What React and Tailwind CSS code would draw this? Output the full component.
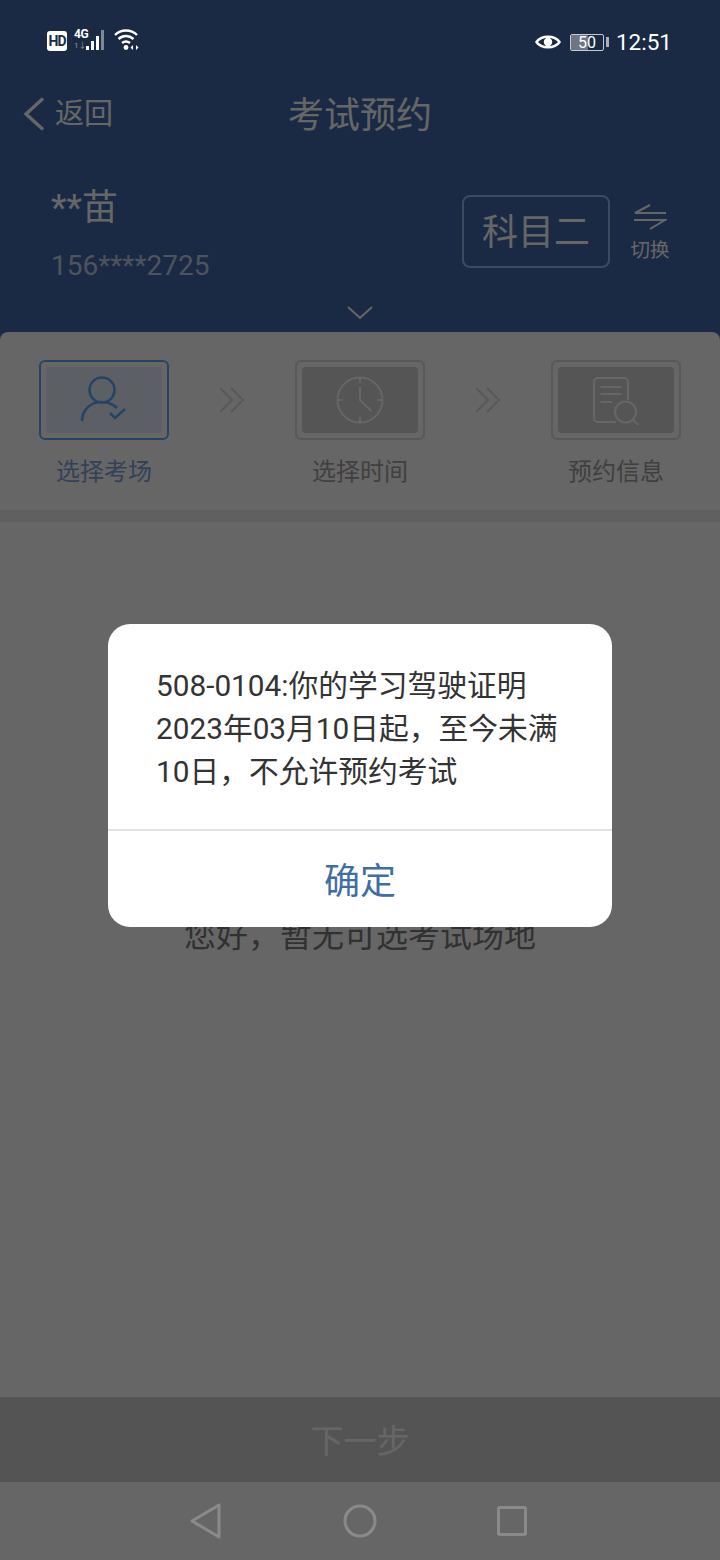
const font = { fontFamily: '"Roboto", "Noto Sans CJK SC", sans-serif' };

const StepTile = ({ active, label, children }) => (
  <div className="flex flex-col items-center w-[130px]">
    <div
      className={`w-[130px] h-[80px] rounded-[6px] border-2 p-[5px] ${
        active ? "border-[#5fa8ff]" : "border-[#dedede]"
      }`}
    >
      <div
        className={`w-full h-full rounded-[4px] flex items-center justify-center ${
          active ? "bg-[#e6f0fb] text-[#5fa8ff]" : "bg-[#d4d4d4] text-white"
        }`}
      >
        {children}
      </div>
    </div>
    <span className={`mt-[16px] text-[24px] leading-[32px] ${active ? "text-[#7aa6dc]" : "text-[#a0a0a0]"}`}>
      {label}
    </span>
  </div>
);

const DoubleArrow = () => (
  <svg width="26" height="26" viewBox="0 0 26 26" fill="none" stroke="#dedede" strokeWidth="2" className="mb-[37px]">
    <path d="M1 1 L13 13 L1 25" />
    <path d="M12 1 L24 13 L12 25" />
  </svg>
);

const StatusBar = () => (
  <div className="absolute top-0 left-0 right-0 h-[82px] flex items-start justify-between pl-[47px] pr-[48px] pt-[28px] text-white">
    <div className="flex items-center gap-[7px]">
      <span className="w-[20px] h-[20px] mt-[2px] rounded-[3px] bg-white text-[#1a2a44] text-[14px] leading-[20px] font-bold text-center tracking-[-1px]">
        HD
      </span>
      <div className="relative w-[33px] h-[24px]">
        <span className="absolute left-0 top-0 text-[12px] leading-[12px] font-bold tracking-[-0.5px]">4G</span>
        <span className="absolute left-0 top-[14px] text-[8px] leading-[8px] text-[#8b96a8]">1↓</span>
        <svg width="22" height="21" viewBox="0 0 22 21" className="absolute left-[12px] top-[2px]">
          <rect x="0" y="16" width="3" height="4" fill="white" />
          <rect x="5" y="11" width="3" height="9" fill="white" />
          <rect x="10" y="6" width="3" height="14" fill="white" />
          <rect x="15" y="0" width="3" height="20" fill="#7d8797" />
        </svg>
      </div>
      <svg width="26" height="22" viewBox="0 0 26 22" fill="none" stroke="white" strokeWidth="2.4">
        <path d="M1 6 C7 0 17 0 23 6" />
        <path d="M4.5 10 C9 6 15 6 19.5 10" />
        <path d="M8 14 C10.5 12 13.5 12 16 14" />
        <circle cx="12" cy="18.5" r="2.4" fill="white" stroke="none" />
        <path d="M19 16 L16.5 18.5 L19 21 Z M22 16 L24.5 18.5 L22 21 Z" fill="white" stroke="none" />
      </svg>
    </div>
    <div className="flex items-center">
      <svg width="26" height="20" viewBox="0 0 26 20" fill="none" stroke="white" strokeWidth="2.4" className="mr-[9px]">
        <path d="M1.5 10 C6 3 20 3 24.5 10 C20 17 6 17 1.5 10 Z" />
        <circle cx="13" cy="10" r="4.2" fill="white" stroke="none" />
      </svg>
      <div className="relative w-[34px] h-[17px] rounded-[2px] border border-[#c5cad2] overflow-hidden mr-[2px]">
        <div className="absolute left-0 top-0 bottom-0 w-[17px] bg-[#6e7685]" />
        <span className="absolute inset-0 text-center text-[16px] leading-[15px]">50</span>
      </div>
      <span className="w-[3px] h-[10px] bg-[#aab0ba] mr-[7px]" />
      <span className="text-[22.5px] leading-[28px]">12:51</span>
    </div>
  </div>
);

const NavBar = () => (
  <div className="absolute bottom-0 left-0 right-0 h-[78px] bg-[#666666] flex items-center justify-between pl-[190px] pr-[193px]">
    <svg width="32" height="36" viewBox="0 0 32 36" fill="none" stroke="#8a8a8a" strokeWidth="3" strokeLinejoin="round">
      <path d="M2 18 L29 2 V34 Z" />
    </svg>
    <svg width="34" height="34" viewBox="0 0 34 34" fill="none" stroke="#8a8a8a" strokeWidth="3">
      <circle cx="17" cy="17" r="15" />
    </svg>
    <svg width="30" height="30" viewBox="0 0 30 30" fill="none" stroke="#8a8a8a" strokeWidth="3" strokeLinejoin="round">
      <rect x="1.5" y="1.5" width="27" height="27" rx="1.5" />
    </svg>
  </div>
);

export default function App() {
  return (
    <div className="relative w-[720px] h-[1560px] overflow-hidden bg-white" style={font}>
      <div className="h-full flex flex-col">
        {/* blue header */}
        <div className="bg-[#4169aa] h-[340px] shrink-0 text-white">
          <div className="relative h-[64px] mt-[82px] flex items-center justify-center">
            <div className="absolute left-[23px] top-[14px] flex items-center">
              <svg width="22" height="34" viewBox="0 0 22 34" fill="none" stroke="white" strokeWidth="3.4">
                <path d="M20 1.5 L3 17 L20 32.5" />
              </svg>
              <span className="ml-[10px] text-[29px] leading-[36px]">返回</span>
            </div>
            <span className="text-[36px] leading-[48px] pt-[3px]">考试预约</span>
          </div>
          <div className="flex items-start pl-[51px] pr-[50px] mt-[36px]">
            <div className="flex-1">
              <div className="text-[36px] leading-[48px] pt-[2px]">**苗</div>
              <div className="mt-[17px] text-[28px] leading-[34px] text-[#c3d0e6]">156****2725</div>
            </div>
            <div className="mt-[13px] w-[148px] h-[73px] ml-[1px] -mr-[1px] rounded-[8px] border-2 border-[#96b8f0] flex items-center justify-center text-[36px] pt-[3px]">
              科目二
            </div>
            <div className="ml-[21px] mt-[22px] flex flex-col items-center w-[40px]">
              <svg width="34" height="26" viewBox="0 0 34 26" fill="none" stroke="white" strokeWidth="2">
                <path d="M33 9 H2 L17 1" />
                <path d="M1 16 H32 L17 25" />
              </svg>
              <span className="mt-[7px] text-[19.5px] leading-[28px] whitespace-nowrap">切换</span>
            </div>
          </div>
          <div className="flex justify-center mt-[22px]">
            <svg width="28" height="15" viewBox="0 0 28 15" fill="none" stroke="white" strokeWidth="2">
              <path d="M2 2 L14 13 L26 2" />
            </svg>
          </div>
        </div>

        {/* steps */}
        <div className="-mt-[8px] rounded-t-[8px] bg-white h-[178px] shrink-0 flex items-start justify-between px-[39px] pt-[28px]">
          <StepTile active label="选择考场">
            <svg width="60" height="60" viewBox="0 0 60 60" fill="none" stroke="currentColor" strokeWidth="2.6">
              <circle cx="28" cy="20" r="12.5" />
              <path d="M8 51 C8 40 17 32 27 32 C33 32 39 34 43 38" />
              <path d="M36 43 L41 48 L51 39" />
            </svg>
          </StepTile>
          <div className="h-[80px] flex items-center pt-[37px]"><DoubleArrow /></div>
          <StepTile label="选择时间">
            <svg width="60" height="60" viewBox="0 0 60 60" fill="none" stroke="currentColor" strokeWidth="2">
              <circle cx="30" cy="30" r="22.5" />
              <path d="M7.5 30 H13 M47 30 H52.5 M30 7.5 V13 M30 47 V52.5 M30 17 V30 L41.5 41" />
            </svg>
          </StepTile>
          <div className="h-[80px] flex items-center pt-[37px]"><DoubleArrow /></div>
          <StepTile label="预约信息">
            <svg width="60" height="60" viewBox="0 0 60 60" fill="none" stroke="currentColor" strokeWidth="2">
              <path d="M42 30 V12 a4 4 0 0 0 -4 -4 H12 a4 4 0 0 0 -4 4 V48 a4 4 0 0 0 4 4 H30" />
              <path d="M14.5 17 H35.5 M14.5 24 H35.5 M14.5 32 H26" />
              <circle cx="39.5" cy="42" r="10.5" />
              <path d="M47 50 L52.5 55" />
            </svg>
          </StepTile>
        </div>
        <div className="h-[12px] bg-[#f0f0f0] shrink-0" />

        {/* empty state */}
        <div className="flex-1 flex justify-center pt-[392px] text-[32px] leading-[44px] text-[#7c7c7c]">
          您好，暂无可选考试场地
        </div>

        <div className="h-[85px] bg-[#d2d2d2] shrink-0 mb-[78px] flex items-center justify-center text-[33px] text-white pt-[4px]">
          下一步
        </div>
      </div>

      {/* dim layer and dialog */}
      <div className="absolute inset-0 bg-black/60" />
      <StatusBar />
      <NavBar />
      <div className="absolute left-[108px] top-[624px] w-[504px] h-[303px] bg-white rounded-[22px] flex flex-col overflow-hidden">
        <div className="h-[205px] px-[48px] pt-[40px] text-[29.75px] leading-[43px] text-[#333333]">
          <div>508-0104:你的学习驾驶证明</div>
          <div>2023年03月10日起，至今未满</div>
          <div>10日，不允许预约考试</div>
        </div>
        <div className="h-[2px] bg-[#e3e3e3]" />
        <div className="flex-1 flex items-center justify-center text-[36px] text-[#3f6ea5] pt-[6px]">确定</div>
      </div>
    </div>
  );
}
